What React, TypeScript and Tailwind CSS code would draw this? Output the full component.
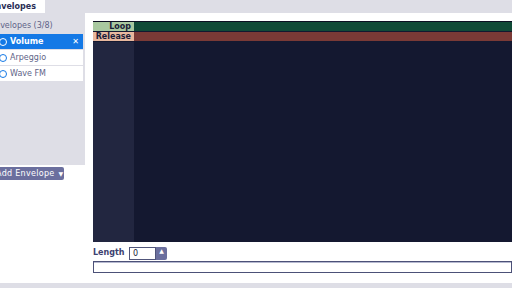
import React from 'react';

const font = { fontFamily: '"DejaVu Sans", "Liberation Sans", sans-serif' };

export default function App() {
  const items = ['Volume', 'Arpeggio', 'Wave FM'];
  return (
    <div className="w-[512px] h-[288px] overflow-hidden bg-white flex flex-col text-[#3c4170]" style={font}>
      {/* tab strip */}
      <div className="h-[13px] bg-[#dedee6] flex shrink-0">
        <div className="bg-white -ml-[12px] pl-[2px] pr-[9px] h-[13px] text-[8px] leading-[13px] font-bold text-[#2a2e55] whitespace-nowrap">Envelopes</div>
      </div>

      <div className="flex-1 flex min-h-0">
        {/* left column */}
        <div className="w-[100px] shrink-0 flex flex-col -ml-[7px]">
          <div className="w-[92px] h-[152px] bg-[#dedee6] flex flex-col">
            <div className="h-[21px] -ml-[3px] text-[8px] leading-[8px] pt-[9px] text-[#5e6388] whitespace-nowrap">Envelopes (3/8)</div>
            <div className="flex flex-col gap-[1px] w-[90px]">
              {items.map((it, i) => (
                <div
                  key={it}
                  className={`h-[15px] flex items-center gap-[3px] pl-[6px] pr-[4px] text-[8px] ${i === 0 ? 'bg-[#1479e6] text-white font-bold' : 'bg-white text-[#5e6388]'}`}
                >
                  <span className={`w-[8px] h-[8px] rounded-full border-[1.5px] ${i === 0 ? 'border-white' : 'border-[#1479e6]'}`} />
                  <span className="flex-1">{it}</span>
                  {i === 0 && <span className="text-[8px]">✕</span>}
                </div>
              ))}
            </div>
          </div>
          <div className="mt-[2px] w-[71px] h-[13px] bg-[#6b6f9e] rounded-[2px] text-white text-[8px] flex items-center pl-[3px] gap-[4px] whitespace-nowrap">
            <span className="tracking-[0.3px]">Add Envelope</span>
            <span className="text-[6px]">▼</span>
          </div>
        </div>

        {/* right column */}
        <div className="flex-1 flex flex-col pt-[8px]">
          <div className="h-[221px] shrink-0 bg-[#141830] border-t border-[#0c0f22] flex">
            <div className="w-[41px] bg-[#222640] flex flex-col">
              <div className="h-[10px] bg-[#a9c9a0] text-[#1a1d38] text-[8px] font-bold leading-[10px] text-right pr-[3px] border-b border-[#141830]">Loop</div>
              <div className="h-[10px] bg-[#e8b89e] text-[#1a1d38] text-[8px] font-bold leading-[10px] text-right pr-[3px] border-b border-[#141830]">Release</div>
            </div>
            <div className="flex-1 flex flex-col">
              <div className="h-[10px] bg-[#104a37] border-b border-[#141830]" />
              <div className="h-[10px] bg-[#7a3a36] border-b border-[#141830]" />
            </div>
          </div>
          <div className="h-[16px] shrink-0 flex items-center gap-[8px] mt-[3px]">
            <span className="text-[8px] font-bold w-[28px]">Length</span>
            <div className="flex h-[13px]">
              <div className="w-[27px] border border-[#50557a] bg-white text-[8px] leading-[11px] pl-[3px] text-[#1a1d38]">0</div>
              <div className="w-[11px] bg-[#6b6f9e] rounded-r-[2px] flex items-start justify-center text-white text-[6px] leading-[8px]">▲</div>
            </div>
          </div>
          <div className="h-[12px] shrink-0 border border-[#4c5178] shadow-[inset_0_1px_0_#b6b9d0]" />
          <div className="flex-1" />
        </div>
      </div>

      <div className="h-[5px] bg-[#dedee6] shrink-0" />
    </div>
  );
}
